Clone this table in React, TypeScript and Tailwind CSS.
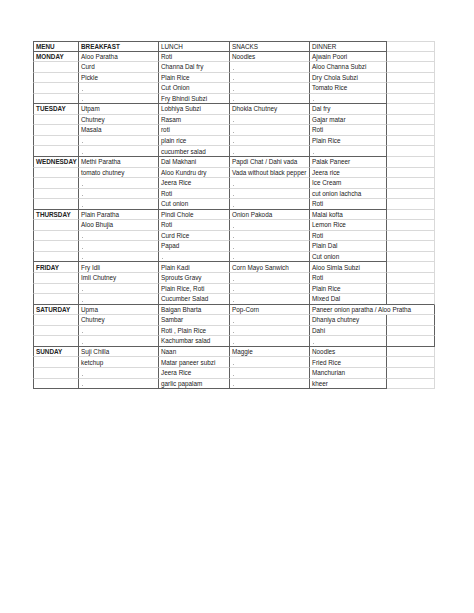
import React from "react";

type Group = { day: string; rows: string[][] };

const groups: Group[] = [
  {
    day: "MONDAY",
    rows: [
      ["Aloo Paratha", "Roti", "Noodles", "Ajwain Poori"],
      ["Curd", "Channa Dal fry", "", "Aloo Channa Subzi"],
      ["Pickle", "Plain Rice", "", "Dry Chola Subzi"],
      ["", "Cut Onion", "", "Tomato Rice"],
      ["", "Fry Bhindi Subzi", "", ""],
    ],
  },
  {
    day: "TUESDAY",
    rows: [
      ["Utpam", "Lobhiya Subzi", "Dhokla Chutney", "Dal fry"],
      ["Chutney", "Rasam", "", "Gajar matar"],
      ["Masala", "roti", "", "Roti"],
      ["", "plain rice", "", "Plain Rice"],
      ["", "cucumber salad", "", ""],
    ],
  },
  {
    day: "WEDNESDAY",
    rows: [
      ["Methi Paratha", "Dal Makhani", "Papdi Chat / Dahi vada", "Palak Paneer"],
      ["tomato chutney", "Aloo Kundru dry", "Vada without black pepper", "Jeera rice"],
      ["", "Jeera Rice", "", "Ice Cream"],
      ["", "Roti", "", "cut onion lachcha"],
      ["", "Cut onion", "", "Roti"],
    ],
  },
  {
    day: "THURSDAY",
    rows: [
      ["Plain Paratha", "Pindi Chole", "Onion Pakoda", "Malai kofta"],
      ["Aloo Bhujia", "Roti", "", "Lemon Rice"],
      ["", "Curd Rice", "", "Roti"],
      ["", "Papad", "", "Plain Dal"],
      ["", "", "", "Cut onion"],
    ],
  },
  {
    day: "FRIDAY",
    rows: [
      ["Fry Idli", "Plain Kadi", "Corn Mayo Sanwich", "Aloo Simla Subzi"],
      ["Imli Chutney", "Sprouts Gravy", "", "Roti"],
      ["", "Plain Rice, Roti", "", "Plain Rice"],
      ["", "Cucumber Salad", "", "Mixed Dal"],
    ],
  },
  {
    day: "SATURDAY",
    rows: [
      ["Upma", "Baigan Bharta", "Pop-Corn", "Paneer onion paratha / Aloo Pratha"],
      ["Chutney", "Sambar", "", "Dhaniya chutney"],
      ["", "Roti , Plain Rice", "", "Dahi"],
      ["", "Kachumbar salad", "", ""],
    ],
  },
  {
    day: "SUNDAY",
    rows: [
      ["Suji Chilla", "Naan", "Maggie", "Noodles"],
      ["ketchup", "Matar paneer subzi", "", "Fried Rice"],
      ["", "Jeera Rice", "", "Manchurian"],
      ["", "garlic papalam", "", "kheer"],
    ],
  },
];

function Cell({
  text,
  bold,
  right,
  bottom,
  left,
  top,
  dot,
  span2,
}: {
  text: string;
  bold?: boolean;
  right: "dark" | "light";
  bottom: "dark" | "light";
  left?: boolean;
  top?: "dark" | "light";
  dot?: boolean;
  span2?: boolean;
}) {
  const cls = [
    "flex items-center overflow-visible whitespace-nowrap pl-[2px] pt-[1px] leading-none",
    span2 ? "col-span-2" : "",
    right === "dark" ? "border-r border-r-[#606060]" : "border-r border-r-[#d9d9d9]",
    bottom === "dark" ? "border-b border-b-[#606060]" : "border-b border-b-[#d9d9d9]",
    left ? "border-l border-l-[#606060]" : "",
    top === "dark" ? "border-t border-t-[#606060]" : top === "light" ? "border-t border-t-[#d9d9d9]" : "",
    bold ? "font-bold" : "",
  ].join(" ");
  return (
    <div className={cls}>
      {text ? (
        <span>{text}</span>
      ) : dot ? (
        <div className="self-end mb-[2px] ml-[1px] w-[1px] h-[1px] bg-[#b0b0b0]" />
      ) : null}
    </div>
  );
}

export default function App() {
  const headers = ["MENU", "BREAKFAST", "LUNCH", "SNACKS", "DINNER"];
  const cells: React.ReactNode[] = [];
  headers.forEach((h, i) => {
    cells.push(
      <Cell
        key={"h" + i}
        text={h}
        bold={i < 2}
        right="dark"
        bottom="dark"
        left={i === 0}
        top="dark"
      />
    );
  });
  cells.push(<Cell key="h5" text="" right="light" bottom="light" top="light" />);

  groups.forEach((g, gi) => {
    const isSat = g.day === "SATURDAY";
    const nextIsSat = groups[gi + 1]?.day === "SATURDAY";
    g.rows.forEach((r, ri) => {
      const last = ri === g.rows.length - 1;
      const bottomMain = last ? "dark" : "light";
      const bottomExtra = last && (isSat || nextIsSat) ? "dark" : "light";
      cells.push(
        <Cell
          key={`${gi}-${ri}-0`}
          text={ri === 0 ? g.day : ""}
          bold
          right="dark"
          bottom={bottomMain}
          left
        />
      );
      const merged = isSat && ri === 0;
      r.forEach((t, ci) => {
        const isDinner = ci === 3;
        cells.push(
          <Cell
            key={`${gi}-${ri}-${ci + 1}`}
            text={t}
            right="dark"
            bottom={bottomMain}
            dot
            span2={merged && isDinner}
          />
        );
      });
      if (!merged) {
        cells.push(
          <Cell
            key={`${gi}-${ri}-5`}
            text=""
            right={isSat ? "dark" : "light"}
            bottom={bottomExtra}
          />
        );
      }
    });
  });

  return (
    <div className="w-[474px] h-[613px] bg-white pt-[41px] pl-[33px]">
      <div
        className="grid grid-cols-[46px_80px_71px_80px_77px_48px] auto-rows-[10.55px] text-[6.35px] text-[#222]"
        style={{ fontFamily: '"Liberation Sans", Arial, sans-serif' }}
      >
        {cells}
      </div>
    </div>
  );
}
